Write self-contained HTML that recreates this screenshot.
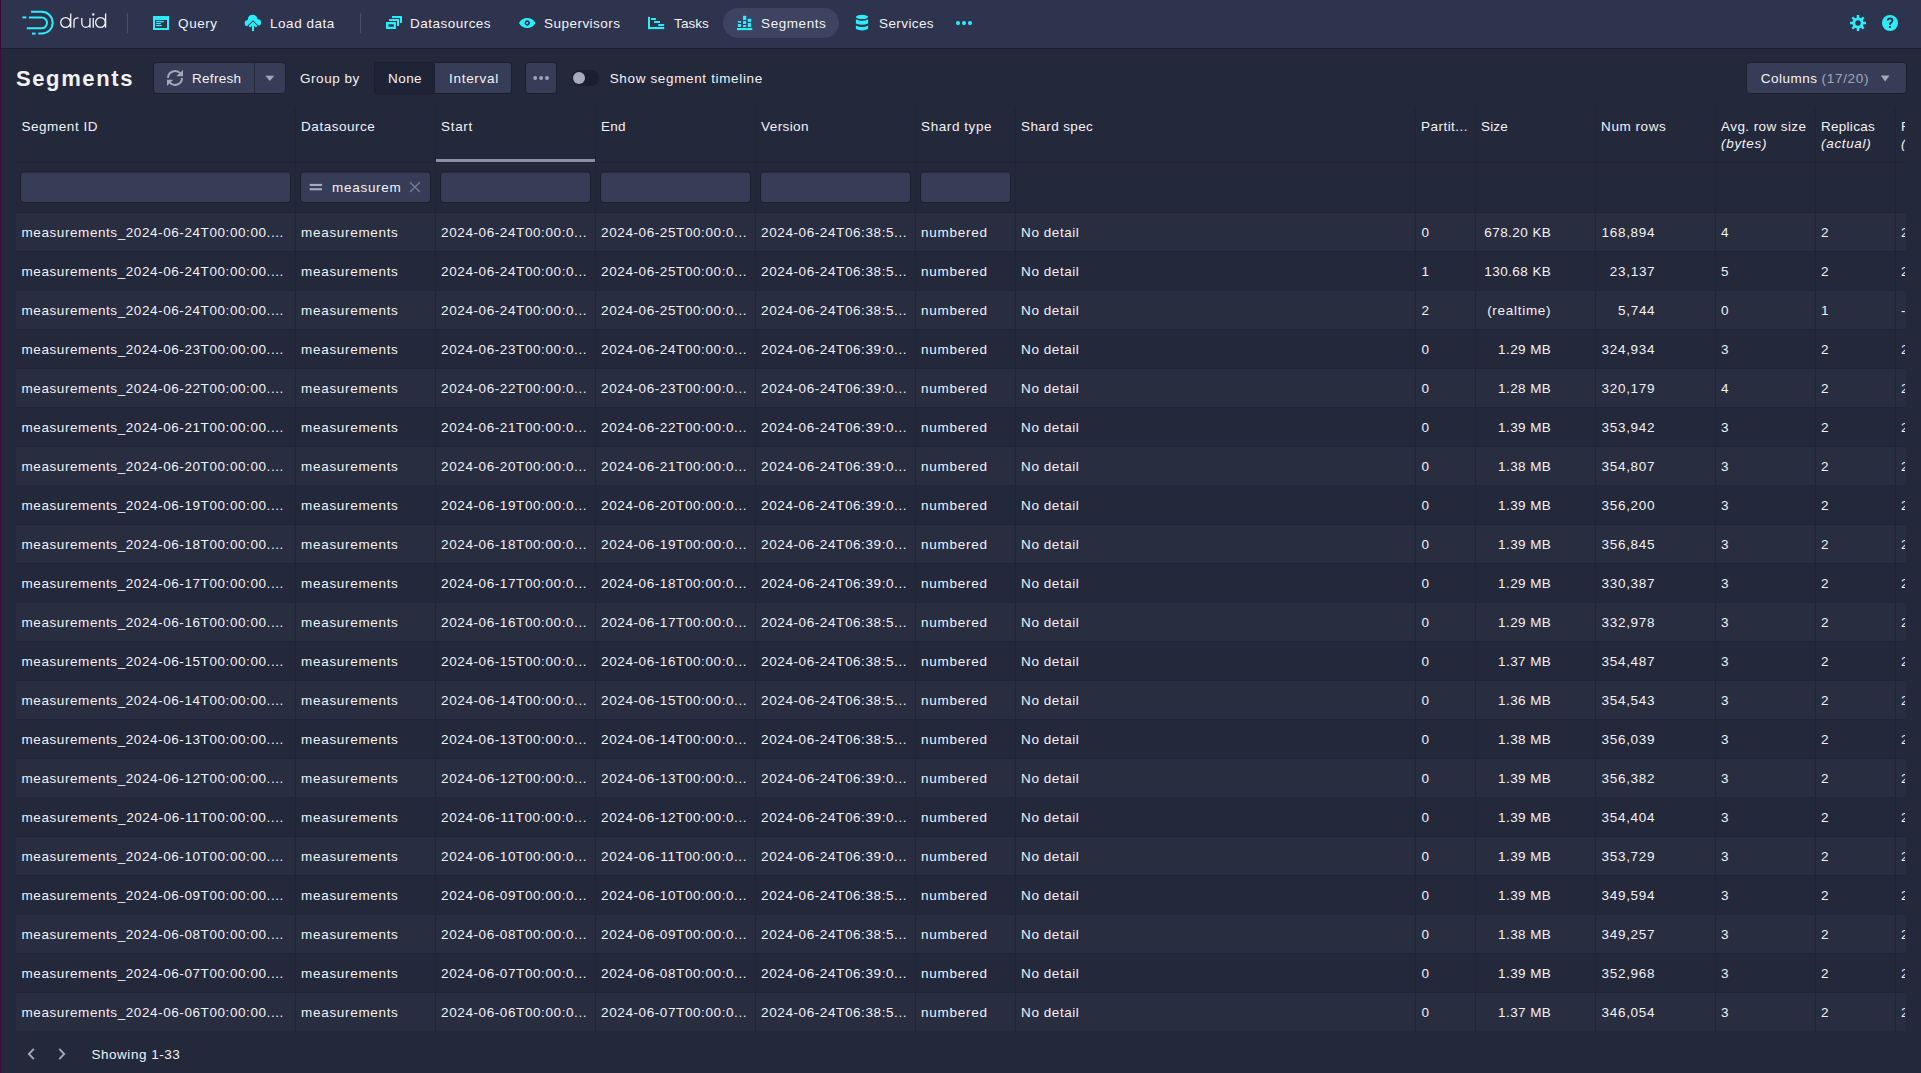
<!DOCTYPE html>
<html><head><meta charset="utf-8"><style>
html,body{margin:0;padding:0}
body{width:1921px;height:1073px;overflow:hidden;position:relative;background:#24283b;font-family:"Liberation Sans",sans-serif;color:#f1f2f6}
.a{position:absolute}
.t{position:absolute;white-space:pre}
.btn{background:#383d57;border-radius:3px;box-shadow:0 0 0 1px rgba(0,0,0,.22)}
.inp{background:#383d57;border-radius:3px;box-shadow:0 0 0 1px rgba(0,0,0,.18),inset 0 1px 1px rgba(0,0,0,.25)}
</style></head><body>
<div class="a" style="left:0;top:0;width:1px;height:1073px;background:#3b0c3c;z-index:50"></div><div class="a" style="left:0;top:0;width:1921px;height:48px;background:#2f344e;box-shadow:0 1px 0 rgba(0,0,0,.25)"></div><svg class="a" style="left:0;top:0" width="120" height="48" viewBox="0 0 120 48" fill="none" stroke="#2ceefb" stroke-width="2" stroke-linecap="butt">
<path d="M31 11.8H41.8A10.9 10.9 0 0 1 41.8 33.6H38.3"/><path d="M32 33.6H35.6"/>
<path d="M28.9 17.4H41.6A5.45 5.45 0 0 1 41.6 28.3H26.8"/><path d="M22.4 17.4H26.4"/>
</svg><svg class="a" style="left:0;top:0" width="120" height="48" viewBox="0 0 120 48" fill="none" stroke="#f4f5f8" stroke-width="1.3" stroke-linecap="butt">
<circle cx="65.6" cy="22.5" r="4.85"/><path d="M70.7 13.4V27.7"/>
<path d="M74 27.7V21Q74 17.9 78.6 17.9"/>
<path d="M81.8 17.9V23.2A4.1 4.1 0 0 0 90 23.2V17.9M90 22V27.7"/>
<path d="M93.3 17.9V27.7"/><circle cx="93.3" cy="14.4" r=".55" fill="#f4f5f8"/>
<circle cx="100.5" cy="22.5" r="4.85"/><path d="M105.6 13.4V27.7"/>
</svg><div class="a" style="left:127px;top:13px;width:1px;height:20px;background:#4a4f6c"></div><div class="a" style="left:360px;top:13px;width:1px;height:20px;background:#4a4f6c"></div><div class="a" style="left:723px;top:8px;width:116px;height:30px;border-radius:15px;background:#3f4362"></div><svg class="a" style="left:153px;top:15px" width="16" height="16" viewBox="0 0 16 16" fill="#2ceefb">
<path fill-rule="evenodd" d="M0 1H16V15H0ZM2 5V13H14V5Z"/><rect x="3" y="6" width="8" height="1.2" rx=".6"/><rect x="3" y="8" width="5" height="1.2" rx=".6"/><rect x="3" y="10" width="6" height="1.2" rx=".6"/></svg><svg class="a" style="left:244px;top:14px" width="18" height="18" viewBox="0 0 18 18">
<defs><mask id="m1"><rect width="18" height="18" fill="#fff"/><path d="M-1 16.2L9 6.2L19 16.2V19H-1Z" fill="#000"/></mask></defs>
<g mask="url(#m1)" fill="#2ceefb"><circle cx="8.6" cy="5.5" r="4.8"/><circle cx="4" cy="9.3" r="3.2"/><circle cx="13.8" cy="8.5" r="3.3"/><rect x="4" y="6" width="9.8" height="7"/></g>
<path d="M5.3 12.8L9 9.1L12.7 12.8" stroke="#2ceefb" stroke-width="2.3" fill="none"/><rect x="7.95" y="10" width="2.1" height="7.1" fill="#2ceefb"/></svg><svg class="a" style="left:386px;top:15px" width="16" height="16" viewBox="0 0 16 16" fill="#2ceefb">
<path d="M6 1H16V8H14V3H6Z"/><path d="M3 4H13V11H11V6H3Z"/><path fill-rule="evenodd" d="M0 7H10V14H0ZM2.5 9.3V11.8H7.8V9.3Z"/></svg><svg class="a" style="left:519px;top:15px" width="17" height="16" viewBox="0 0 17 16" fill="#2ceefb">
<path fill-rule="evenodd" d="M0 8C3.2 1.2 13.3 1.2 16.5 8C13.3 14.8 3.2 14.8 0 8ZM8.25 5.3A2.7 2.7 0 1 0 8.26 5.3Z"/><circle cx="8.25" cy="8" r="1.05"/></svg><svg class="a" style="left:648px;top:16px" width="17" height="14" viewBox="0 0 17 14" fill="#2ceefb">
<rect x="0" y="0.8" width="2" height="12.3"/><rect x="0" y="11" width="16.2" height="2.1"/>
<rect x="3" y="1.9" width="5" height="2.1" rx=".5"/><rect x="6" y="5" width="6" height="2.1" rx=".5"/><rect x="10.2" y="8" width="6" height="1.9" rx=".5"/></svg><svg class="a" style="left:736px;top:15px" width="17" height="16" viewBox="0 0 17 16" fill="#2ceefb">
<rect x="1" y="13" width="15.2" height="2.1"/>
<rect x="1.9" y="5.9" width="3.2" height="1.9" rx=".6"/><rect x="1.9" y="9" width="3.2" height="3" rx=".4"/>
<rect x="7" y="0.8" width="3.2" height="4.2" rx=".4"/><rect x="7" y="6.1" width="3.2" height="2.9" rx=".3"/><rect x="7" y="10" width="3.2" height="2" rx=".6"/>
<rect x="11.8" y="3.8" width="3.4" height="3.2" rx=".4"/><rect x="11.8" y="8.1" width="3.4" height="3.9" rx=".4"/></svg><svg class="a" style="left:854px;top:14px" width="16" height="18" viewBox="0 0 16 18" fill="#2ceefb">
<ellipse cx="8" cy="2.9" rx="6.1" ry="2.1"/>
<path d="M1.9 5.2Q8 8.4 14.1 5.2V9.4Q8 12.2 1.9 9.4Z"/><path d="M1.9 11.4Q8 14.4 14.1 11.4V15.1Q8 18 1.9 15.1Z"/></svg><svg class="a" style="left:950px;top:15px" width="26" height="16" viewBox="0 0 26 16" fill="#2ceefb">
<circle cx="8" cy="8.1" r="2.05"/><circle cx="14" cy="8.1" r="2.05"/><circle cx="20" cy="8.1" r="2.05"/></svg><svg class="a" style="left:1850px;top:15px" width="16" height="16" viewBox="-8 -8 16 16" fill="#2ceefb">
<rect x="-1.25" y="-8" width="2.5" height="4" transform="rotate(0)"/><rect x="-1.25" y="-8" width="2.5" height="4" transform="rotate(45)"/><rect x="-1.25" y="-8" width="2.5" height="4" transform="rotate(90)"/><rect x="-1.25" y="-8" width="2.5" height="4" transform="rotate(135)"/><rect x="-1.25" y="-8" width="2.5" height="4" transform="rotate(180)"/><rect x="-1.25" y="-8" width="2.5" height="4" transform="rotate(225)"/><rect x="-1.25" y="-8" width="2.5" height="4" transform="rotate(270)"/><rect x="-1.25" y="-8" width="2.5" height="4" transform="rotate(315)"/><path fill-rule="evenodd" d="M0 -5.6A5.6 5.6 0 1 1 -0.01 -5.6ZM0 -2.75A2.75 2.75 0 1 0 0.01 -2.75Z"/></svg><svg class="a" style="left:1882px;top:15px" width="16" height="16" viewBox="0 0 16 16">
<circle cx="8" cy="8" r="8" fill="#2ceefb"/><path d="M5.6 5.6Q5.8 3.4 8.1 3.4Q10.5 3.5 10.4 5.5Q10.3 6.7 9 7.6Q7.9 8.3 7.9 9.6V10.1" stroke="#2a2d45" stroke-width="1.9" fill="none"/><rect x="6.9" y="11" width="2" height="1.8" fill="#2a2d45"/></svg><div class="a btn" style="left:154px;top:63px;width:131px;height:30px"></div><div class="a" style="left:254px;top:63px;width:1px;height:30px;background:#262a3e"></div><svg class="a" style="left:166px;top:69px" width="18" height="18" viewBox="0 0 18 18" fill="none" stroke="#a3a7ba" stroke-width="2">
<path d="M2 9A7 7 0 0 1 14.4 4.6"/><path d="M16 9A7 7 0 0 1 3.6 13.4"/>
<path d="M10.5 6.9H17V1.2" stroke-width="0" fill="#a3a7ba"/>
</svg><svg class="a" style="left:166px;top:69px" width="18" height="18" viewBox="0 0 18 18" fill="#a3a7ba">
<path d="M17 1V7.3H10.7Z"/><path d="M1 17V10.7H7.3Z"/></svg><svg class="a" style="left:265px;top:75px" width="10" height="7" viewBox="0 0 10 7"><path d="M0.3 0.8H9.3L4.8 6Z" fill="#a3a7ba"/></svg><div class="a" style="left:375px;top:63px;width:136px;height:30px;border-radius:3px;background:#1f2336;box-shadow:0 0 0 1px rgba(0,0,0,.25)"></div><div class="a" style="left:435px;top:63px;width:76px;height:30px;border-radius:0 3px 3px 0;background:#383d57"></div><div class="a btn" style="left:526px;top:63px;width:30px;height:30px"></div><svg class="a" style="left:530px;top:73px" width="22" height="10" viewBox="0 0 22 10" fill="#a3a7ba">
<circle cx="5.2" cy="5" r="1.9"/><circle cx="11.1" cy="5" r="1.9"/><circle cx="17" cy="5" r="1.9"/></svg><div class="a" style="left:572px;top:70px;width:27px;height:16px;border-radius:8px;background:#1b1e2f"></div><div class="a" style="left:573px;top:72px;width:12px;height:12px;border-radius:6px;background:#a7abbf"></div><div class="a btn" style="left:1747px;top:63px;width:159px;height:30px"></div><svg class="a" style="left:1880px;top:75px" width="10" height="7" viewBox="0 0 10 7"><path d="M0.8 0.5H9.5L5.15 6.5Z" fill="#a3a7ba"/></svg><div class="a" style="left:16px;top:108px;width:1890px;height:923px;overflow:hidden"><div class="a" style="left:0px;top:105px;width:1890px;height:38px;background:#292d40;"></div><div class="a" style="left:0px;top:143px;width:1889px;height:1px;background:#20243a;"></div><div class="a" style="left:0px;top:182px;width:1889px;height:1px;background:#20243a;"></div><div class="a" style="left:0px;top:183px;width:1890px;height:38px;background:#292d40;"></div><div class="a" style="left:0px;top:221px;width:1889px;height:1px;background:#20243a;"></div><div class="a" style="left:0px;top:260px;width:1889px;height:1px;background:#20243a;"></div><div class="a" style="left:0px;top:261px;width:1890px;height:38px;background:#292d40;"></div><div class="a" style="left:0px;top:299px;width:1889px;height:1px;background:#20243a;"></div><div class="a" style="left:0px;top:338px;width:1889px;height:1px;background:#20243a;"></div><div class="a" style="left:0px;top:339px;width:1890px;height:38px;background:#292d40;"></div><div class="a" style="left:0px;top:377px;width:1889px;height:1px;background:#20243a;"></div><div class="a" style="left:0px;top:416px;width:1889px;height:1px;background:#20243a;"></div><div class="a" style="left:0px;top:417px;width:1890px;height:38px;background:#292d40;"></div><div class="a" style="left:0px;top:455px;width:1889px;height:1px;background:#20243a;"></div><div class="a" style="left:0px;top:494px;width:1889px;height:1px;background:#20243a;"></div><div class="a" style="left:0px;top:495px;width:1890px;height:38px;background:#292d40;"></div><div class="a" style="left:0px;top:533px;width:1889px;height:1px;background:#20243a;"></div><div class="a" style="left:0px;top:572px;width:1889px;height:1px;background:#20243a;"></div><div class="a" style="left:0px;top:573px;width:1890px;height:38px;background:#292d40;"></div><div class="a" style="left:0px;top:611px;width:1889px;height:1px;background:#20243a;"></div><div class="a" style="left:0px;top:650px;width:1889px;height:1px;background:#20243a;"></div><div class="a" style="left:0px;top:651px;width:1890px;height:38px;background:#292d40;"></div><div class="a" style="left:0px;top:689px;width:1889px;height:1px;background:#20243a;"></div><div class="a" style="left:0px;top:728px;width:1889px;height:1px;background:#20243a;"></div><div class="a" style="left:0px;top:729px;width:1890px;height:38px;background:#292d40;"></div><div class="a" style="left:0px;top:767px;width:1889px;height:1px;background:#20243a;"></div><div class="a" style="left:0px;top:806px;width:1889px;height:1px;background:#20243a;"></div><div class="a" style="left:0px;top:807px;width:1890px;height:38px;background:#292d40;"></div><div class="a" style="left:0px;top:845px;width:1889px;height:1px;background:#20243a;"></div><div class="a" style="left:0px;top:884px;width:1889px;height:1px;background:#20243a;"></div><div class="a" style="left:0px;top:885px;width:1890px;height:38px;background:#292d40;"></div><div class="a" style="left:0px;top:923px;width:1889px;height:1px;background:#20243a;"></div><div class="a" style="left:0px;top:54px;width:1889px;height:1px;background:#1f2335;"></div><div class="a" style="left:0px;top:104px;width:1889px;height:1px;background:#1f2335;"></div><div class="a" style="left:279px;top:0px;width:1px;height:923px;background:#20243a;"></div><div class="a" style="left:419px;top:0px;width:1px;height:923px;background:#20243a;"></div><div class="a" style="left:579px;top:0px;width:1px;height:923px;background:#20243a;"></div><div class="a" style="left:739px;top:0px;width:1px;height:923px;background:#20243a;"></div><div class="a" style="left:899px;top:0px;width:1px;height:923px;background:#20243a;"></div><div class="a" style="left:999px;top:0px;width:1px;height:923px;background:#20243a;"></div><div class="a" style="left:1399px;top:0px;width:1px;height:923px;background:#20243a;"></div><div class="a" style="left:1459px;top:0px;width:1px;height:923px;background:#20243a;"></div><div class="a" style="left:1579px;top:0px;width:1px;height:923px;background:#20243a;"></div><div class="a" style="left:1699px;top:0px;width:1px;height:923px;background:#20243a;"></div><div class="a" style="left:1799px;top:0px;width:1px;height:923px;background:#20243a;"></div><div class="a" style="left:1879px;top:0px;width:1px;height:923px;background:#20243a;"></div><div class="a" style="left:420px;top:51px;width:159px;height:3px;background:#8b8fa7;"></div><div class="a inp" style="left:5px;top:64px;width:269px;height:30px"></div><div class="a inp" style="left:285px;top:64px;width:129px;height:30px"></div><div class="a inp" style="left:425px;top:64px;width:149px;height:30px"></div><div class="a inp" style="left:585px;top:64px;width:149px;height:30px"></div><div class="a inp" style="left:745px;top:64px;width:149px;height:30px"></div><div class="a inp" style="left:905px;top:64px;width:89px;height:30px"></div><svg class="a" style="left:293px;top:74px" width="14" height="10" viewBox="0 0 14 10" fill="#a7abbf"><rect x="0.7" y="1.9" width="12.3" height="2.1"/><rect x="0.7" y="6.2" width="12.3" height="2.1"/></svg><svg class="a" style="left:392px;top:73px" width="14" height="12" viewBox="0 0 14 12" stroke="#737891" stroke-width="1.5"><path d="M2 1.2L11.8 11M11.8 1.2L2 11"/></svg></div><svg class="a" style="left:25px;top:1047px" width="12" height="14" viewBox="0 0 12 14" fill="none" stroke="#a3a7ba" stroke-width="1.9"><path d="M8.8 1.8L3.9 7L8.8 12.2"/></svg><svg class="a" style="left:56px;top:1047px" width="12" height="14" viewBox="0 0 12 14" fill="none" stroke="#a3a7ba" stroke-width="1.9"><path d="M3.3 1.8L8.2 7L3.3 12.2"/></svg>
<div class="a" style="left:0;top:0;width:1905px;height:1073px;overflow:hidden">
<div class="t" style="left:178.10px;top:17px;font-size:13.5px;line-height:14px;letter-spacing:0.550px">Query</div>
<div class="t" style="left:270.10px;top:17px;font-size:13.5px;line-height:14px;letter-spacing:0.505px">Load data</div>
<div class="t" style="left:410.10px;top:17px;font-size:13.5px;line-height:14px;letter-spacing:0.472px">Datasources</div>
<div class="t" style="left:544.10px;top:17px;font-size:13.5px;line-height:14px;letter-spacing:0.452px">Supervisors</div>
<div class="t" style="left:674.10px;top:17px;font-size:13.5px;line-height:14px;letter-spacing:0.066px">Tasks</div>
<div class="t" style="left:761.10px;top:17px;font-size:13.5px;line-height:14px;letter-spacing:0.561px">Segments</div>
<div class="t" style="left:879.10px;top:17px;font-size:13.5px;line-height:14px;letter-spacing:0.383px">Services</div>
<div class="t" style="left:16.00px;top:68px;font-size:22px;line-height:22px;letter-spacing:1.607px;font-weight:700">Segments</div>
<div class="t" style="left:192.10px;top:72px;font-size:13.5px;line-height:14px;letter-spacing:0.259px">Refresh</div>
<div class="t" style="left:300.10px;top:72px;font-size:13.5px;line-height:14px;letter-spacing:0.516px">Group by</div>
<div class="t" style="left:388.10px;top:72px;font-size:13.5px;line-height:14px;letter-spacing:0.410px">None</div>
<div class="t" style="left:449.10px;top:72px;font-size:13.5px;line-height:14px;letter-spacing:0.689px">Interval</div>
<div class="t" style="left:609.70px;top:72px;font-size:13.5px;line-height:14px;letter-spacing:0.649px">Show segment timeline</div>
<div class="t" style="left:1760.80px;top:72px;font-size:13.5px;line-height:14px;letter-spacing:0.469px">Columns</div>
<div class="t" style="left:1821.60px;top:72px;font-size:13.5px;line-height:14px;letter-spacing:0.690px;color:#a3a7ba">(17/20)</div>
<div class="t" style="left:21.50px;top:120px;font-size:13.5px;line-height:14px;letter-spacing:0.519px">Segment ID</div>
<div class="t" style="left:301.10px;top:120px;font-size:13.5px;line-height:14px;letter-spacing:0.517px">Datasource</div>
<div class="t" style="left:441.10px;top:120px;font-size:13.5px;line-height:14px;letter-spacing:0.650px">Start</div>
<div class="t" style="left:601.10px;top:120px;font-size:13.5px;line-height:14px;letter-spacing:0.229px">End</div>
<div class="t" style="left:761.10px;top:120px;font-size:13.5px;line-height:14px;letter-spacing:0.397px">Version</div>
<div class="t" style="left:921.10px;top:120px;font-size:13.5px;line-height:14px;letter-spacing:0.570px">Shard type</div>
<div class="t" style="left:1021.10px;top:120px;font-size:13.5px;line-height:14px;letter-spacing:0.384px">Shard spec</div>
<div class="t" style="left:1421.10px;top:120px;font-size:13.5px;line-height:14px;letter-spacing:0.446px">Partit...</div>
<div class="t" style="left:1481.10px;top:120px;font-size:13.5px;line-height:14px;letter-spacing:0.105px">Size</div>
<div class="t" style="left:1601.10px;top:120px;font-size:13.5px;line-height:14px;letter-spacing:0.553px">Num rows</div>
<div class="t" style="left:1721.10px;top:120px;font-size:13.5px;line-height:14px;letter-spacing:0.407px">Avg. row size</div>
<div class="t" style="left:1821.10px;top:120px;font-size:13.5px;line-height:14px;letter-spacing:0.254px">Replicas</div>
<div class="t" style="left:1901.10px;top:120px;font-size:13.5px;line-height:14px;letter-spacing:-0.703px">R</div>
<div class="t" style="left:1721.10px;top:137px;font-size:13.5px;line-height:14px;letter-spacing:0.672px;font-style:italic">(bytes)</div>
<div class="t" style="left:1821.10px;top:137px;font-size:13.5px;line-height:14px;letter-spacing:0.645px;font-style:italic">(actual)</div>
<div class="t" style="left:1901.10px;top:137px;font-size:13.5px;line-height:14px;letter-spacing:0.578px;font-style:italic">(</div>
<div class="t" style="left:332.10px;top:181px;font-size:13.5px;line-height:14px;letter-spacing:0.699px">measurem</div>
<div class="t" style="left:91.50px;top:1048px;font-size:13.5px;line-height:14px;letter-spacing:0.522px">Showing 1-33</div>
<div class="t" style="left:21.50px;top:226px;font-size:13.5px;line-height:14px;letter-spacing:0.576px">measurements_2024-06-24T00:00:00....</div>
<div class="t" style="left:301.10px;top:226px;font-size:13.5px;line-height:14px;letter-spacing:0.681px">measurements</div>
<div class="t" style="left:441.10px;top:226px;font-size:13.5px;line-height:14px;letter-spacing:0.591px">2024-06-24T00:00:0...</div>
<div class="t" style="left:601.10px;top:226px;font-size:13.5px;line-height:14px;letter-spacing:0.591px">2024-06-25T00:00:0...</div>
<div class="t" style="left:761.10px;top:226px;font-size:13.5px;line-height:14px;letter-spacing:0.591px">2024-06-24T06:38:5...</div>
<div class="t" style="left:921.10px;top:226px;font-size:13.5px;line-height:14px;letter-spacing:0.738px">numbered</div>
<div class="t" style="left:1021.10px;top:226px;font-size:13.5px;line-height:14px;letter-spacing:0.562px">No detail</div>
<div class="t" style="left:1421.60px;top:226px;font-size:13.5px;line-height:14px;letter-spacing:0.766px">0</div>
<div class="t" style="left:1484.22px;top:226px;font-size:13.5px;line-height:14px;letter-spacing:0.446px">678.20 KB</div>
<div class="t" style="left:1601.53px;top:226px;font-size:13.5px;line-height:14px;letter-spacing:0.708px">168,894</div>
<div class="t" style="left:1721.10px;top:226px;font-size:13.5px;line-height:14px;letter-spacing:0.766px">4</div>
<div class="t" style="left:1821.10px;top:226px;font-size:13.5px;line-height:14px;letter-spacing:0.766px">2</div>
<div class="t" style="left:1901.10px;top:226px;font-size:13.5px;line-height:14px;letter-spacing:0.766px">2</div>
<div class="t" style="left:21.50px;top:265px;font-size:13.5px;line-height:14px;letter-spacing:0.576px">measurements_2024-06-24T00:00:00....</div>
<div class="t" style="left:301.10px;top:265px;font-size:13.5px;line-height:14px;letter-spacing:0.681px">measurements</div>
<div class="t" style="left:441.10px;top:265px;font-size:13.5px;line-height:14px;letter-spacing:0.591px">2024-06-24T00:00:0...</div>
<div class="t" style="left:601.10px;top:265px;font-size:13.5px;line-height:14px;letter-spacing:0.591px">2024-06-25T00:00:0...</div>
<div class="t" style="left:761.10px;top:265px;font-size:13.5px;line-height:14px;letter-spacing:0.591px">2024-06-24T06:38:5...</div>
<div class="t" style="left:921.10px;top:265px;font-size:13.5px;line-height:14px;letter-spacing:0.738px">numbered</div>
<div class="t" style="left:1021.10px;top:265px;font-size:13.5px;line-height:14px;letter-spacing:0.562px">No detail</div>
<div class="t" style="left:1421.60px;top:265px;font-size:13.5px;line-height:14px;letter-spacing:0.766px">1</div>
<div class="t" style="left:1484.22px;top:265px;font-size:13.5px;line-height:14px;letter-spacing:0.446px">130.68 KB</div>
<div class="t" style="left:1609.80px;top:265px;font-size:13.5px;line-height:14px;letter-spacing:0.701px">23,137</div>
<div class="t" style="left:1721.10px;top:265px;font-size:13.5px;line-height:14px;letter-spacing:0.766px">5</div>
<div class="t" style="left:1821.10px;top:265px;font-size:13.5px;line-height:14px;letter-spacing:0.766px">2</div>
<div class="t" style="left:1901.10px;top:265px;font-size:13.5px;line-height:14px;letter-spacing:0.766px">2</div>
<div class="t" style="left:21.50px;top:304px;font-size:13.5px;line-height:14px;letter-spacing:0.576px">measurements_2024-06-24T00:00:00....</div>
<div class="t" style="left:301.10px;top:304px;font-size:13.5px;line-height:14px;letter-spacing:0.681px">measurements</div>
<div class="t" style="left:441.10px;top:304px;font-size:13.5px;line-height:14px;letter-spacing:0.591px">2024-06-24T00:00:0...</div>
<div class="t" style="left:601.10px;top:304px;font-size:13.5px;line-height:14px;letter-spacing:0.591px">2024-06-25T00:00:0...</div>
<div class="t" style="left:761.10px;top:304px;font-size:13.5px;line-height:14px;letter-spacing:0.591px">2024-06-24T06:38:5...</div>
<div class="t" style="left:921.10px;top:304px;font-size:13.5px;line-height:14px;letter-spacing:0.738px">numbered</div>
<div class="t" style="left:1021.10px;top:304px;font-size:13.5px;line-height:14px;letter-spacing:0.562px">No detail</div>
<div class="t" style="left:1421.60px;top:304px;font-size:13.5px;line-height:14px;letter-spacing:0.766px">2</div>
<div class="t" style="left:1487.14px;top:304px;font-size:13.5px;line-height:14px;letter-spacing:0.714px">(realtime)</div>
<div class="t" style="left:1618.08px;top:304px;font-size:13.5px;line-height:14px;letter-spacing:0.684px">5,744</div>
<div class="t" style="left:1721.10px;top:304px;font-size:13.5px;line-height:14px;letter-spacing:0.766px">0</div>
<div class="t" style="left:1821.10px;top:304px;font-size:13.5px;line-height:14px;letter-spacing:0.766px">1</div>
<div class="t" style="left:1901.10px;top:304px;font-size:13.5px;line-height:14px;letter-spacing:0.203px">-</div>
<div class="t" style="left:21.50px;top:343px;font-size:13.5px;line-height:14px;letter-spacing:0.576px">measurements_2024-06-23T00:00:00....</div>
<div class="t" style="left:301.10px;top:343px;font-size:13.5px;line-height:14px;letter-spacing:0.681px">measurements</div>
<div class="t" style="left:441.10px;top:343px;font-size:13.5px;line-height:14px;letter-spacing:0.591px">2024-06-23T00:00:0...</div>
<div class="t" style="left:601.10px;top:343px;font-size:13.5px;line-height:14px;letter-spacing:0.591px">2024-06-24T00:00:0...</div>
<div class="t" style="left:761.10px;top:343px;font-size:13.5px;line-height:14px;letter-spacing:0.591px">2024-06-24T06:39:0...</div>
<div class="t" style="left:921.10px;top:343px;font-size:13.5px;line-height:14px;letter-spacing:0.738px">numbered</div>
<div class="t" style="left:1021.10px;top:343px;font-size:13.5px;line-height:14px;letter-spacing:0.562px">No detail</div>
<div class="t" style="left:1421.60px;top:343px;font-size:13.5px;line-height:14px;letter-spacing:0.766px">0</div>
<div class="t" style="left:1498.08px;top:343px;font-size:13.5px;line-height:14px;letter-spacing:0.420px">1.29 MB</div>
<div class="t" style="left:1601.53px;top:343px;font-size:13.5px;line-height:14px;letter-spacing:0.708px">324,934</div>
<div class="t" style="left:1721.10px;top:343px;font-size:13.5px;line-height:14px;letter-spacing:0.766px">3</div>
<div class="t" style="left:1821.10px;top:343px;font-size:13.5px;line-height:14px;letter-spacing:0.766px">2</div>
<div class="t" style="left:1901.10px;top:343px;font-size:13.5px;line-height:14px;letter-spacing:0.766px">2</div>
<div class="t" style="left:21.50px;top:382px;font-size:13.5px;line-height:14px;letter-spacing:0.576px">measurements_2024-06-22T00:00:00....</div>
<div class="t" style="left:301.10px;top:382px;font-size:13.5px;line-height:14px;letter-spacing:0.681px">measurements</div>
<div class="t" style="left:441.10px;top:382px;font-size:13.5px;line-height:14px;letter-spacing:0.591px">2024-06-22T00:00:0...</div>
<div class="t" style="left:601.10px;top:382px;font-size:13.5px;line-height:14px;letter-spacing:0.591px">2024-06-23T00:00:0...</div>
<div class="t" style="left:761.10px;top:382px;font-size:13.5px;line-height:14px;letter-spacing:0.591px">2024-06-24T06:39:0...</div>
<div class="t" style="left:921.10px;top:382px;font-size:13.5px;line-height:14px;letter-spacing:0.738px">numbered</div>
<div class="t" style="left:1021.10px;top:382px;font-size:13.5px;line-height:14px;letter-spacing:0.562px">No detail</div>
<div class="t" style="left:1421.60px;top:382px;font-size:13.5px;line-height:14px;letter-spacing:0.766px">0</div>
<div class="t" style="left:1498.08px;top:382px;font-size:13.5px;line-height:14px;letter-spacing:0.420px">1.28 MB</div>
<div class="t" style="left:1601.53px;top:382px;font-size:13.5px;line-height:14px;letter-spacing:0.708px">320,179</div>
<div class="t" style="left:1721.10px;top:382px;font-size:13.5px;line-height:14px;letter-spacing:0.766px">4</div>
<div class="t" style="left:1821.10px;top:382px;font-size:13.5px;line-height:14px;letter-spacing:0.766px">2</div>
<div class="t" style="left:1901.10px;top:382px;font-size:13.5px;line-height:14px;letter-spacing:0.766px">2</div>
<div class="t" style="left:21.50px;top:421px;font-size:13.5px;line-height:14px;letter-spacing:0.576px">measurements_2024-06-21T00:00:00....</div>
<div class="t" style="left:301.10px;top:421px;font-size:13.5px;line-height:14px;letter-spacing:0.681px">measurements</div>
<div class="t" style="left:441.10px;top:421px;font-size:13.5px;line-height:14px;letter-spacing:0.591px">2024-06-21T00:00:0...</div>
<div class="t" style="left:601.10px;top:421px;font-size:13.5px;line-height:14px;letter-spacing:0.591px">2024-06-22T00:00:0...</div>
<div class="t" style="left:761.10px;top:421px;font-size:13.5px;line-height:14px;letter-spacing:0.591px">2024-06-24T06:39:0...</div>
<div class="t" style="left:921.10px;top:421px;font-size:13.5px;line-height:14px;letter-spacing:0.738px">numbered</div>
<div class="t" style="left:1021.10px;top:421px;font-size:13.5px;line-height:14px;letter-spacing:0.562px">No detail</div>
<div class="t" style="left:1421.60px;top:421px;font-size:13.5px;line-height:14px;letter-spacing:0.766px">0</div>
<div class="t" style="left:1498.08px;top:421px;font-size:13.5px;line-height:14px;letter-spacing:0.420px">1.39 MB</div>
<div class="t" style="left:1601.53px;top:421px;font-size:13.5px;line-height:14px;letter-spacing:0.708px">353,942</div>
<div class="t" style="left:1721.10px;top:421px;font-size:13.5px;line-height:14px;letter-spacing:0.766px">3</div>
<div class="t" style="left:1821.10px;top:421px;font-size:13.5px;line-height:14px;letter-spacing:0.766px">2</div>
<div class="t" style="left:1901.10px;top:421px;font-size:13.5px;line-height:14px;letter-spacing:0.766px">2</div>
<div class="t" style="left:21.50px;top:460px;font-size:13.5px;line-height:14px;letter-spacing:0.576px">measurements_2024-06-20T00:00:00....</div>
<div class="t" style="left:301.10px;top:460px;font-size:13.5px;line-height:14px;letter-spacing:0.681px">measurements</div>
<div class="t" style="left:441.10px;top:460px;font-size:13.5px;line-height:14px;letter-spacing:0.591px">2024-06-20T00:00:0...</div>
<div class="t" style="left:601.10px;top:460px;font-size:13.5px;line-height:14px;letter-spacing:0.591px">2024-06-21T00:00:0...</div>
<div class="t" style="left:761.10px;top:460px;font-size:13.5px;line-height:14px;letter-spacing:0.591px">2024-06-24T06:39:0...</div>
<div class="t" style="left:921.10px;top:460px;font-size:13.5px;line-height:14px;letter-spacing:0.738px">numbered</div>
<div class="t" style="left:1021.10px;top:460px;font-size:13.5px;line-height:14px;letter-spacing:0.562px">No detail</div>
<div class="t" style="left:1421.60px;top:460px;font-size:13.5px;line-height:14px;letter-spacing:0.766px">0</div>
<div class="t" style="left:1498.08px;top:460px;font-size:13.5px;line-height:14px;letter-spacing:0.420px">1.38 MB</div>
<div class="t" style="left:1601.53px;top:460px;font-size:13.5px;line-height:14px;letter-spacing:0.708px">354,807</div>
<div class="t" style="left:1721.10px;top:460px;font-size:13.5px;line-height:14px;letter-spacing:0.766px">3</div>
<div class="t" style="left:1821.10px;top:460px;font-size:13.5px;line-height:14px;letter-spacing:0.766px">2</div>
<div class="t" style="left:1901.10px;top:460px;font-size:13.5px;line-height:14px;letter-spacing:0.766px">2</div>
<div class="t" style="left:21.50px;top:499px;font-size:13.5px;line-height:14px;letter-spacing:0.576px">measurements_2024-06-19T00:00:00....</div>
<div class="t" style="left:301.10px;top:499px;font-size:13.5px;line-height:14px;letter-spacing:0.681px">measurements</div>
<div class="t" style="left:441.10px;top:499px;font-size:13.5px;line-height:14px;letter-spacing:0.591px">2024-06-19T00:00:0...</div>
<div class="t" style="left:601.10px;top:499px;font-size:13.5px;line-height:14px;letter-spacing:0.591px">2024-06-20T00:00:0...</div>
<div class="t" style="left:761.10px;top:499px;font-size:13.5px;line-height:14px;letter-spacing:0.591px">2024-06-24T06:39:0...</div>
<div class="t" style="left:921.10px;top:499px;font-size:13.5px;line-height:14px;letter-spacing:0.738px">numbered</div>
<div class="t" style="left:1021.10px;top:499px;font-size:13.5px;line-height:14px;letter-spacing:0.562px">No detail</div>
<div class="t" style="left:1421.60px;top:499px;font-size:13.5px;line-height:14px;letter-spacing:0.766px">0</div>
<div class="t" style="left:1498.08px;top:499px;font-size:13.5px;line-height:14px;letter-spacing:0.420px">1.39 MB</div>
<div class="t" style="left:1601.53px;top:499px;font-size:13.5px;line-height:14px;letter-spacing:0.708px">356,200</div>
<div class="t" style="left:1721.10px;top:499px;font-size:13.5px;line-height:14px;letter-spacing:0.766px">3</div>
<div class="t" style="left:1821.10px;top:499px;font-size:13.5px;line-height:14px;letter-spacing:0.766px">2</div>
<div class="t" style="left:1901.10px;top:499px;font-size:13.5px;line-height:14px;letter-spacing:0.766px">2</div>
<div class="t" style="left:21.50px;top:538px;font-size:13.5px;line-height:14px;letter-spacing:0.576px">measurements_2024-06-18T00:00:00....</div>
<div class="t" style="left:301.10px;top:538px;font-size:13.5px;line-height:14px;letter-spacing:0.681px">measurements</div>
<div class="t" style="left:441.10px;top:538px;font-size:13.5px;line-height:14px;letter-spacing:0.591px">2024-06-18T00:00:0...</div>
<div class="t" style="left:601.10px;top:538px;font-size:13.5px;line-height:14px;letter-spacing:0.591px">2024-06-19T00:00:0...</div>
<div class="t" style="left:761.10px;top:538px;font-size:13.5px;line-height:14px;letter-spacing:0.591px">2024-06-24T06:39:0...</div>
<div class="t" style="left:921.10px;top:538px;font-size:13.5px;line-height:14px;letter-spacing:0.738px">numbered</div>
<div class="t" style="left:1021.10px;top:538px;font-size:13.5px;line-height:14px;letter-spacing:0.562px">No detail</div>
<div class="t" style="left:1421.60px;top:538px;font-size:13.5px;line-height:14px;letter-spacing:0.766px">0</div>
<div class="t" style="left:1498.08px;top:538px;font-size:13.5px;line-height:14px;letter-spacing:0.420px">1.39 MB</div>
<div class="t" style="left:1601.53px;top:538px;font-size:13.5px;line-height:14px;letter-spacing:0.708px">356,845</div>
<div class="t" style="left:1721.10px;top:538px;font-size:13.5px;line-height:14px;letter-spacing:0.766px">3</div>
<div class="t" style="left:1821.10px;top:538px;font-size:13.5px;line-height:14px;letter-spacing:0.766px">2</div>
<div class="t" style="left:1901.10px;top:538px;font-size:13.5px;line-height:14px;letter-spacing:0.766px">2</div>
<div class="t" style="left:21.50px;top:577px;font-size:13.5px;line-height:14px;letter-spacing:0.576px">measurements_2024-06-17T00:00:00....</div>
<div class="t" style="left:301.10px;top:577px;font-size:13.5px;line-height:14px;letter-spacing:0.681px">measurements</div>
<div class="t" style="left:441.10px;top:577px;font-size:13.5px;line-height:14px;letter-spacing:0.591px">2024-06-17T00:00:0...</div>
<div class="t" style="left:601.10px;top:577px;font-size:13.5px;line-height:14px;letter-spacing:0.591px">2024-06-18T00:00:0...</div>
<div class="t" style="left:761.10px;top:577px;font-size:13.5px;line-height:14px;letter-spacing:0.591px">2024-06-24T06:39:0...</div>
<div class="t" style="left:921.10px;top:577px;font-size:13.5px;line-height:14px;letter-spacing:0.738px">numbered</div>
<div class="t" style="left:1021.10px;top:577px;font-size:13.5px;line-height:14px;letter-spacing:0.562px">No detail</div>
<div class="t" style="left:1421.60px;top:577px;font-size:13.5px;line-height:14px;letter-spacing:0.766px">0</div>
<div class="t" style="left:1498.08px;top:577px;font-size:13.5px;line-height:14px;letter-spacing:0.420px">1.29 MB</div>
<div class="t" style="left:1601.53px;top:577px;font-size:13.5px;line-height:14px;letter-spacing:0.708px">330,387</div>
<div class="t" style="left:1721.10px;top:577px;font-size:13.5px;line-height:14px;letter-spacing:0.766px">3</div>
<div class="t" style="left:1821.10px;top:577px;font-size:13.5px;line-height:14px;letter-spacing:0.766px">2</div>
<div class="t" style="left:1901.10px;top:577px;font-size:13.5px;line-height:14px;letter-spacing:0.766px">2</div>
<div class="t" style="left:21.50px;top:616px;font-size:13.5px;line-height:14px;letter-spacing:0.576px">measurements_2024-06-16T00:00:00....</div>
<div class="t" style="left:301.10px;top:616px;font-size:13.5px;line-height:14px;letter-spacing:0.681px">measurements</div>
<div class="t" style="left:441.10px;top:616px;font-size:13.5px;line-height:14px;letter-spacing:0.591px">2024-06-16T00:00:0...</div>
<div class="t" style="left:601.10px;top:616px;font-size:13.5px;line-height:14px;letter-spacing:0.591px">2024-06-17T00:00:0...</div>
<div class="t" style="left:761.10px;top:616px;font-size:13.5px;line-height:14px;letter-spacing:0.591px">2024-06-24T06:38:5...</div>
<div class="t" style="left:921.10px;top:616px;font-size:13.5px;line-height:14px;letter-spacing:0.738px">numbered</div>
<div class="t" style="left:1021.10px;top:616px;font-size:13.5px;line-height:14px;letter-spacing:0.562px">No detail</div>
<div class="t" style="left:1421.60px;top:616px;font-size:13.5px;line-height:14px;letter-spacing:0.766px">0</div>
<div class="t" style="left:1498.08px;top:616px;font-size:13.5px;line-height:14px;letter-spacing:0.420px">1.29 MB</div>
<div class="t" style="left:1601.53px;top:616px;font-size:13.5px;line-height:14px;letter-spacing:0.708px">332,978</div>
<div class="t" style="left:1721.10px;top:616px;font-size:13.5px;line-height:14px;letter-spacing:0.766px">3</div>
<div class="t" style="left:1821.10px;top:616px;font-size:13.5px;line-height:14px;letter-spacing:0.766px">2</div>
<div class="t" style="left:1901.10px;top:616px;font-size:13.5px;line-height:14px;letter-spacing:0.766px">2</div>
<div class="t" style="left:21.50px;top:655px;font-size:13.5px;line-height:14px;letter-spacing:0.576px">measurements_2024-06-15T00:00:00....</div>
<div class="t" style="left:301.10px;top:655px;font-size:13.5px;line-height:14px;letter-spacing:0.681px">measurements</div>
<div class="t" style="left:441.10px;top:655px;font-size:13.5px;line-height:14px;letter-spacing:0.591px">2024-06-15T00:00:0...</div>
<div class="t" style="left:601.10px;top:655px;font-size:13.5px;line-height:14px;letter-spacing:0.591px">2024-06-16T00:00:0...</div>
<div class="t" style="left:761.10px;top:655px;font-size:13.5px;line-height:14px;letter-spacing:0.591px">2024-06-24T06:38:5...</div>
<div class="t" style="left:921.10px;top:655px;font-size:13.5px;line-height:14px;letter-spacing:0.738px">numbered</div>
<div class="t" style="left:1021.10px;top:655px;font-size:13.5px;line-height:14px;letter-spacing:0.562px">No detail</div>
<div class="t" style="left:1421.60px;top:655px;font-size:13.5px;line-height:14px;letter-spacing:0.766px">0</div>
<div class="t" style="left:1498.08px;top:655px;font-size:13.5px;line-height:14px;letter-spacing:0.420px">1.37 MB</div>
<div class="t" style="left:1601.53px;top:655px;font-size:13.5px;line-height:14px;letter-spacing:0.708px">354,487</div>
<div class="t" style="left:1721.10px;top:655px;font-size:13.5px;line-height:14px;letter-spacing:0.766px">3</div>
<div class="t" style="left:1821.10px;top:655px;font-size:13.5px;line-height:14px;letter-spacing:0.766px">2</div>
<div class="t" style="left:1901.10px;top:655px;font-size:13.5px;line-height:14px;letter-spacing:0.766px">2</div>
<div class="t" style="left:21.50px;top:694px;font-size:13.5px;line-height:14px;letter-spacing:0.576px">measurements_2024-06-14T00:00:00....</div>
<div class="t" style="left:301.10px;top:694px;font-size:13.5px;line-height:14px;letter-spacing:0.681px">measurements</div>
<div class="t" style="left:441.10px;top:694px;font-size:13.5px;line-height:14px;letter-spacing:0.591px">2024-06-14T00:00:0...</div>
<div class="t" style="left:601.10px;top:694px;font-size:13.5px;line-height:14px;letter-spacing:0.591px">2024-06-15T00:00:0...</div>
<div class="t" style="left:761.10px;top:694px;font-size:13.5px;line-height:14px;letter-spacing:0.591px">2024-06-24T06:38:5...</div>
<div class="t" style="left:921.10px;top:694px;font-size:13.5px;line-height:14px;letter-spacing:0.738px">numbered</div>
<div class="t" style="left:1021.10px;top:694px;font-size:13.5px;line-height:14px;letter-spacing:0.562px">No detail</div>
<div class="t" style="left:1421.60px;top:694px;font-size:13.5px;line-height:14px;letter-spacing:0.766px">0</div>
<div class="t" style="left:1498.08px;top:694px;font-size:13.5px;line-height:14px;letter-spacing:0.420px">1.36 MB</div>
<div class="t" style="left:1601.53px;top:694px;font-size:13.5px;line-height:14px;letter-spacing:0.708px">354,543</div>
<div class="t" style="left:1721.10px;top:694px;font-size:13.5px;line-height:14px;letter-spacing:0.766px">3</div>
<div class="t" style="left:1821.10px;top:694px;font-size:13.5px;line-height:14px;letter-spacing:0.766px">2</div>
<div class="t" style="left:1901.10px;top:694px;font-size:13.5px;line-height:14px;letter-spacing:0.766px">2</div>
<div class="t" style="left:21.50px;top:733px;font-size:13.5px;line-height:14px;letter-spacing:0.576px">measurements_2024-06-13T00:00:00....</div>
<div class="t" style="left:301.10px;top:733px;font-size:13.5px;line-height:14px;letter-spacing:0.681px">measurements</div>
<div class="t" style="left:441.10px;top:733px;font-size:13.5px;line-height:14px;letter-spacing:0.591px">2024-06-13T00:00:0...</div>
<div class="t" style="left:601.10px;top:733px;font-size:13.5px;line-height:14px;letter-spacing:0.591px">2024-06-14T00:00:0...</div>
<div class="t" style="left:761.10px;top:733px;font-size:13.5px;line-height:14px;letter-spacing:0.591px">2024-06-24T06:38:5...</div>
<div class="t" style="left:921.10px;top:733px;font-size:13.5px;line-height:14px;letter-spacing:0.738px">numbered</div>
<div class="t" style="left:1021.10px;top:733px;font-size:13.5px;line-height:14px;letter-spacing:0.562px">No detail</div>
<div class="t" style="left:1421.60px;top:733px;font-size:13.5px;line-height:14px;letter-spacing:0.766px">0</div>
<div class="t" style="left:1498.08px;top:733px;font-size:13.5px;line-height:14px;letter-spacing:0.420px">1.38 MB</div>
<div class="t" style="left:1601.53px;top:733px;font-size:13.5px;line-height:14px;letter-spacing:0.708px">356,039</div>
<div class="t" style="left:1721.10px;top:733px;font-size:13.5px;line-height:14px;letter-spacing:0.766px">3</div>
<div class="t" style="left:1821.10px;top:733px;font-size:13.5px;line-height:14px;letter-spacing:0.766px">2</div>
<div class="t" style="left:1901.10px;top:733px;font-size:13.5px;line-height:14px;letter-spacing:0.766px">2</div>
<div class="t" style="left:21.50px;top:772px;font-size:13.5px;line-height:14px;letter-spacing:0.576px">measurements_2024-06-12T00:00:00....</div>
<div class="t" style="left:301.10px;top:772px;font-size:13.5px;line-height:14px;letter-spacing:0.681px">measurements</div>
<div class="t" style="left:441.10px;top:772px;font-size:13.5px;line-height:14px;letter-spacing:0.591px">2024-06-12T00:00:0...</div>
<div class="t" style="left:601.10px;top:772px;font-size:13.5px;line-height:14px;letter-spacing:0.591px">2024-06-13T00:00:0...</div>
<div class="t" style="left:761.10px;top:772px;font-size:13.5px;line-height:14px;letter-spacing:0.591px">2024-06-24T06:39:0...</div>
<div class="t" style="left:921.10px;top:772px;font-size:13.5px;line-height:14px;letter-spacing:0.738px">numbered</div>
<div class="t" style="left:1021.10px;top:772px;font-size:13.5px;line-height:14px;letter-spacing:0.562px">No detail</div>
<div class="t" style="left:1421.60px;top:772px;font-size:13.5px;line-height:14px;letter-spacing:0.766px">0</div>
<div class="t" style="left:1498.08px;top:772px;font-size:13.5px;line-height:14px;letter-spacing:0.420px">1.39 MB</div>
<div class="t" style="left:1601.53px;top:772px;font-size:13.5px;line-height:14px;letter-spacing:0.708px">356,382</div>
<div class="t" style="left:1721.10px;top:772px;font-size:13.5px;line-height:14px;letter-spacing:0.766px">3</div>
<div class="t" style="left:1821.10px;top:772px;font-size:13.5px;line-height:14px;letter-spacing:0.766px">2</div>
<div class="t" style="left:1901.10px;top:772px;font-size:13.5px;line-height:14px;letter-spacing:0.766px">2</div>
<div class="t" style="left:21.50px;top:811px;font-size:13.5px;line-height:14px;letter-spacing:0.603px">measurements_2024-06-11T00:00:00....</div>
<div class="t" style="left:301.10px;top:811px;font-size:13.5px;line-height:14px;letter-spacing:0.681px">measurements</div>
<div class="t" style="left:441.10px;top:811px;font-size:13.5px;line-height:14px;letter-spacing:0.638px">2024-06-11T00:00:0...</div>
<div class="t" style="left:601.10px;top:811px;font-size:13.5px;line-height:14px;letter-spacing:0.591px">2024-06-12T00:00:0...</div>
<div class="t" style="left:761.10px;top:811px;font-size:13.5px;line-height:14px;letter-spacing:0.591px">2024-06-24T06:39:0...</div>
<div class="t" style="left:921.10px;top:811px;font-size:13.5px;line-height:14px;letter-spacing:0.738px">numbered</div>
<div class="t" style="left:1021.10px;top:811px;font-size:13.5px;line-height:14px;letter-spacing:0.562px">No detail</div>
<div class="t" style="left:1421.60px;top:811px;font-size:13.5px;line-height:14px;letter-spacing:0.766px">0</div>
<div class="t" style="left:1498.08px;top:811px;font-size:13.5px;line-height:14px;letter-spacing:0.420px">1.39 MB</div>
<div class="t" style="left:1601.53px;top:811px;font-size:13.5px;line-height:14px;letter-spacing:0.708px">354,404</div>
<div class="t" style="left:1721.10px;top:811px;font-size:13.5px;line-height:14px;letter-spacing:0.766px">3</div>
<div class="t" style="left:1821.10px;top:811px;font-size:13.5px;line-height:14px;letter-spacing:0.766px">2</div>
<div class="t" style="left:1901.10px;top:811px;font-size:13.5px;line-height:14px;letter-spacing:0.766px">2</div>
<div class="t" style="left:21.50px;top:850px;font-size:13.5px;line-height:14px;letter-spacing:0.576px">measurements_2024-06-10T00:00:00....</div>
<div class="t" style="left:301.10px;top:850px;font-size:13.5px;line-height:14px;letter-spacing:0.681px">measurements</div>
<div class="t" style="left:441.10px;top:850px;font-size:13.5px;line-height:14px;letter-spacing:0.591px">2024-06-10T00:00:0...</div>
<div class="t" style="left:601.10px;top:850px;font-size:13.5px;line-height:14px;letter-spacing:0.638px">2024-06-11T00:00:0...</div>
<div class="t" style="left:761.10px;top:850px;font-size:13.5px;line-height:14px;letter-spacing:0.591px">2024-06-24T06:39:0...</div>
<div class="t" style="left:921.10px;top:850px;font-size:13.5px;line-height:14px;letter-spacing:0.738px">numbered</div>
<div class="t" style="left:1021.10px;top:850px;font-size:13.5px;line-height:14px;letter-spacing:0.562px">No detail</div>
<div class="t" style="left:1421.60px;top:850px;font-size:13.5px;line-height:14px;letter-spacing:0.766px">0</div>
<div class="t" style="left:1498.08px;top:850px;font-size:13.5px;line-height:14px;letter-spacing:0.420px">1.39 MB</div>
<div class="t" style="left:1601.53px;top:850px;font-size:13.5px;line-height:14px;letter-spacing:0.708px">353,729</div>
<div class="t" style="left:1721.10px;top:850px;font-size:13.5px;line-height:14px;letter-spacing:0.766px">3</div>
<div class="t" style="left:1821.10px;top:850px;font-size:13.5px;line-height:14px;letter-spacing:0.766px">2</div>
<div class="t" style="left:1901.10px;top:850px;font-size:13.5px;line-height:14px;letter-spacing:0.766px">2</div>
<div class="t" style="left:21.50px;top:889px;font-size:13.5px;line-height:14px;letter-spacing:0.576px">measurements_2024-06-09T00:00:00....</div>
<div class="t" style="left:301.10px;top:889px;font-size:13.5px;line-height:14px;letter-spacing:0.681px">measurements</div>
<div class="t" style="left:441.10px;top:889px;font-size:13.5px;line-height:14px;letter-spacing:0.591px">2024-06-09T00:00:0...</div>
<div class="t" style="left:601.10px;top:889px;font-size:13.5px;line-height:14px;letter-spacing:0.591px">2024-06-10T00:00:0...</div>
<div class="t" style="left:761.10px;top:889px;font-size:13.5px;line-height:14px;letter-spacing:0.591px">2024-06-24T06:38:5...</div>
<div class="t" style="left:921.10px;top:889px;font-size:13.5px;line-height:14px;letter-spacing:0.738px">numbered</div>
<div class="t" style="left:1021.10px;top:889px;font-size:13.5px;line-height:14px;letter-spacing:0.562px">No detail</div>
<div class="t" style="left:1421.60px;top:889px;font-size:13.5px;line-height:14px;letter-spacing:0.766px">0</div>
<div class="t" style="left:1498.08px;top:889px;font-size:13.5px;line-height:14px;letter-spacing:0.420px">1.39 MB</div>
<div class="t" style="left:1601.53px;top:889px;font-size:13.5px;line-height:14px;letter-spacing:0.708px">349,594</div>
<div class="t" style="left:1721.10px;top:889px;font-size:13.5px;line-height:14px;letter-spacing:0.766px">3</div>
<div class="t" style="left:1821.10px;top:889px;font-size:13.5px;line-height:14px;letter-spacing:0.766px">2</div>
<div class="t" style="left:1901.10px;top:889px;font-size:13.5px;line-height:14px;letter-spacing:0.766px">2</div>
<div class="t" style="left:21.50px;top:928px;font-size:13.5px;line-height:14px;letter-spacing:0.576px">measurements_2024-06-08T00:00:00....</div>
<div class="t" style="left:301.10px;top:928px;font-size:13.5px;line-height:14px;letter-spacing:0.681px">measurements</div>
<div class="t" style="left:441.10px;top:928px;font-size:13.5px;line-height:14px;letter-spacing:0.591px">2024-06-08T00:00:0...</div>
<div class="t" style="left:601.10px;top:928px;font-size:13.5px;line-height:14px;letter-spacing:0.591px">2024-06-09T00:00:0...</div>
<div class="t" style="left:761.10px;top:928px;font-size:13.5px;line-height:14px;letter-spacing:0.591px">2024-06-24T06:38:5...</div>
<div class="t" style="left:921.10px;top:928px;font-size:13.5px;line-height:14px;letter-spacing:0.738px">numbered</div>
<div class="t" style="left:1021.10px;top:928px;font-size:13.5px;line-height:14px;letter-spacing:0.562px">No detail</div>
<div class="t" style="left:1421.60px;top:928px;font-size:13.5px;line-height:14px;letter-spacing:0.766px">0</div>
<div class="t" style="left:1498.08px;top:928px;font-size:13.5px;line-height:14px;letter-spacing:0.420px">1.38 MB</div>
<div class="t" style="left:1601.53px;top:928px;font-size:13.5px;line-height:14px;letter-spacing:0.708px">349,257</div>
<div class="t" style="left:1721.10px;top:928px;font-size:13.5px;line-height:14px;letter-spacing:0.766px">3</div>
<div class="t" style="left:1821.10px;top:928px;font-size:13.5px;line-height:14px;letter-spacing:0.766px">2</div>
<div class="t" style="left:1901.10px;top:928px;font-size:13.5px;line-height:14px;letter-spacing:0.766px">2</div>
<div class="t" style="left:21.50px;top:967px;font-size:13.5px;line-height:14px;letter-spacing:0.576px">measurements_2024-06-07T00:00:00....</div>
<div class="t" style="left:301.10px;top:967px;font-size:13.5px;line-height:14px;letter-spacing:0.681px">measurements</div>
<div class="t" style="left:441.10px;top:967px;font-size:13.5px;line-height:14px;letter-spacing:0.591px">2024-06-07T00:00:0...</div>
<div class="t" style="left:601.10px;top:967px;font-size:13.5px;line-height:14px;letter-spacing:0.591px">2024-06-08T00:00:0...</div>
<div class="t" style="left:761.10px;top:967px;font-size:13.5px;line-height:14px;letter-spacing:0.591px">2024-06-24T06:39:0...</div>
<div class="t" style="left:921.10px;top:967px;font-size:13.5px;line-height:14px;letter-spacing:0.738px">numbered</div>
<div class="t" style="left:1021.10px;top:967px;font-size:13.5px;line-height:14px;letter-spacing:0.562px">No detail</div>
<div class="t" style="left:1421.60px;top:967px;font-size:13.5px;line-height:14px;letter-spacing:0.766px">0</div>
<div class="t" style="left:1498.08px;top:967px;font-size:13.5px;line-height:14px;letter-spacing:0.420px">1.39 MB</div>
<div class="t" style="left:1601.53px;top:967px;font-size:13.5px;line-height:14px;letter-spacing:0.708px">352,968</div>
<div class="t" style="left:1721.10px;top:967px;font-size:13.5px;line-height:14px;letter-spacing:0.766px">3</div>
<div class="t" style="left:1821.10px;top:967px;font-size:13.5px;line-height:14px;letter-spacing:0.766px">2</div>
<div class="t" style="left:1901.10px;top:967px;font-size:13.5px;line-height:14px;letter-spacing:0.766px">2</div>
<div class="t" style="left:21.50px;top:1006px;font-size:13.5px;line-height:14px;letter-spacing:0.576px">measurements_2024-06-06T00:00:00....</div>
<div class="t" style="left:301.10px;top:1006px;font-size:13.5px;line-height:14px;letter-spacing:0.681px">measurements</div>
<div class="t" style="left:441.10px;top:1006px;font-size:13.5px;line-height:14px;letter-spacing:0.591px">2024-06-06T00:00:0...</div>
<div class="t" style="left:601.10px;top:1006px;font-size:13.5px;line-height:14px;letter-spacing:0.591px">2024-06-07T00:00:0...</div>
<div class="t" style="left:761.10px;top:1006px;font-size:13.5px;line-height:14px;letter-spacing:0.591px">2024-06-24T06:38:5...</div>
<div class="t" style="left:921.10px;top:1006px;font-size:13.5px;line-height:14px;letter-spacing:0.738px">numbered</div>
<div class="t" style="left:1021.10px;top:1006px;font-size:13.5px;line-height:14px;letter-spacing:0.562px">No detail</div>
<div class="t" style="left:1421.60px;top:1006px;font-size:13.5px;line-height:14px;letter-spacing:0.766px">0</div>
<div class="t" style="left:1498.08px;top:1006px;font-size:13.5px;line-height:14px;letter-spacing:0.420px">1.37 MB</div>
<div class="t" style="left:1601.53px;top:1006px;font-size:13.5px;line-height:14px;letter-spacing:0.708px">346,054</div>
<div class="t" style="left:1721.10px;top:1006px;font-size:13.5px;line-height:14px;letter-spacing:0.766px">3</div>
<div class="t" style="left:1821.10px;top:1006px;font-size:13.5px;line-height:14px;letter-spacing:0.766px">2</div>
<div class="t" style="left:1901.10px;top:1006px;font-size:13.5px;line-height:14px;letter-spacing:0.766px">2</div>
</div>
</body></html>
